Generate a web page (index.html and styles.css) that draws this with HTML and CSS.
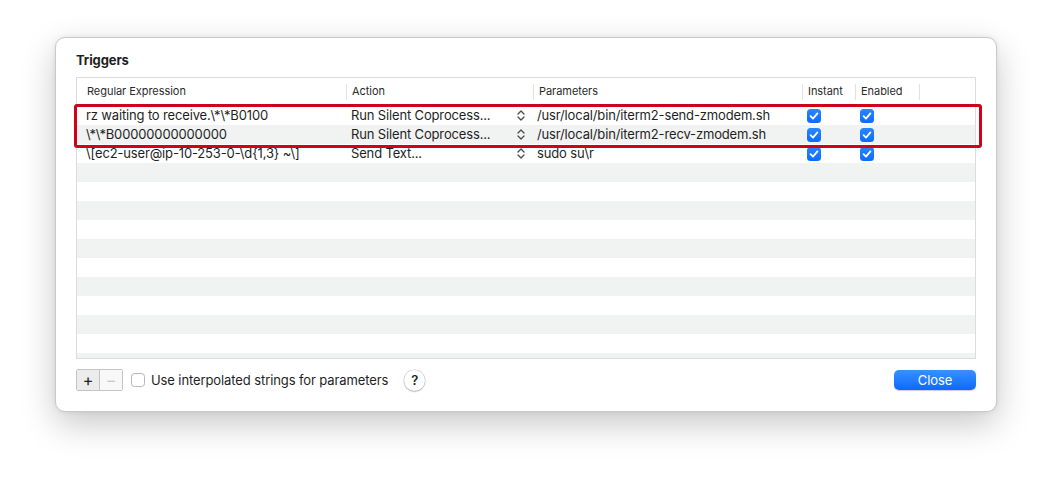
FILE: index.html
```html
<!DOCTYPE html>
<html>
<head>
<meta charset="utf-8">
<link rel="stylesheet" href="styles.css">
</head>
<body>
<div class="window">
  <div class="title">Triggers</div>
  <div class="table">
    <div class="thead">
      <div class="th c1">Regular Expression</div>
      <div class="th c2 sep">Action</div>
      <div class="th c3 sep">Parameters</div>
      <div class="th c4 sep">Instant</div>
      <div class="th c5 sep">Enabled</div>
      <div class="th c6 sep"></div>
    </div>
    <div class="tbody">
      <div class="tr">
        <div class="td c1">rz waiting to receive.\*\*B0100</div>
        <div class="td c2"><span class="act">Run Silent Coprocess...</span><svg class="chev" width="8" height="11" viewBox="0 0 8 11"><path d="M1 4 L4 1 L7 4 M1 7 L4 10 L7 7" fill="none" stroke="#4a4a4a" stroke-width="1.3" stroke-linecap="round" stroke-linejoin="round"/></svg></div>
        <div class="td c3">/usr/local/bin/iterm2-send-zmodem.sh</div>
        <div class="td c4"><span class="cb on"><svg width="14" height="14" viewBox="0 0 14 14"><path d="M3.6 7.2 L6 9.6 L10.4 4.4" fill="none" stroke="#fff" stroke-width="1.8" stroke-linecap="round" stroke-linejoin="round"/></svg></span></div>
        <div class="td c5"><span class="cb on"><svg width="14" height="14" viewBox="0 0 14 14"><path d="M3.6 7.2 L6 9.6 L10.4 4.4" fill="none" stroke="#fff" stroke-width="1.8" stroke-linecap="round" stroke-linejoin="round"/></svg></span></div>
        <div class="td c6"></div>
      </div>
      <div class="tr">
        <div class="td c1">\*\*B00000000000000</div>
        <div class="td c2"><span class="act">Run Silent Coprocess...</span><svg class="chev" width="8" height="11" viewBox="0 0 8 11"><path d="M1 4 L4 1 L7 4 M1 7 L4 10 L7 7" fill="none" stroke="#4a4a4a" stroke-width="1.3" stroke-linecap="round" stroke-linejoin="round"/></svg></div>
        <div class="td c3">/usr/local/bin/iterm2-recv-zmodem.sh</div>
        <div class="td c4"><span class="cb on"><svg width="14" height="14" viewBox="0 0 14 14"><path d="M3.6 7.2 L6 9.6 L10.4 4.4" fill="none" stroke="#fff" stroke-width="1.8" stroke-linecap="round" stroke-linejoin="round"/></svg></span></div>
        <div class="td c5"><span class="cb on"><svg width="14" height="14" viewBox="0 0 14 14"><path d="M3.6 7.2 L6 9.6 L10.4 4.4" fill="none" stroke="#fff" stroke-width="1.8" stroke-linecap="round" stroke-linejoin="round"/></svg></span></div>
        <div class="td c6"></div>
      </div>
      <div class="tr">
        <div class="td c1">\[ec2-user@ip-10-253-0-\d{1,3} ~\]</div>
        <div class="td c2"><span class="act">Send Text...</span><svg class="chev" width="8" height="11" viewBox="0 0 8 11"><path d="M1 4 L4 1 L7 4 M1 7 L4 10 L7 7" fill="none" stroke="#4a4a4a" stroke-width="1.3" stroke-linecap="round" stroke-linejoin="round"/></svg></div>
        <div class="td c3">sudo su\r</div>
        <div class="td c4"><span class="cb on"><svg width="14" height="14" viewBox="0 0 14 14"><path d="M3.6 7.2 L6 9.6 L10.4 4.4" fill="none" stroke="#fff" stroke-width="1.8" stroke-linecap="round" stroke-linejoin="round"/></svg></span></div>
        <div class="td c5"><span class="cb on"><svg width="14" height="14" viewBox="0 0 14 14"><path d="M3.6 7.2 L6 9.6 L10.4 4.4" fill="none" stroke="#fff" stroke-width="1.8" stroke-linecap="round" stroke-linejoin="round"/></svg></span></div>
        <div class="td c6"></div>
      </div>
    </div>
  </div>
  <div class="footer">
    <div class="seg">
      <div class="seg-btn plus">+</div>
      <div class="seg-btn minus">&minus;</div>
    </div>
    <label class="check"><span class="cb off"></span><span>Use interpolated strings for parameters</span></label>
    <div class="help">?</div>
    <div class="spacer"></div>
    <div class="close">Close</div>
  </div>
  <div class="highlight"></div>
</div>
</body>
</html>
```

FILE: styles.css
```css
* { box-sizing: border-box; }
html, body { margin: 0; padding: 0; background: #ffffff; }
body {
  font-family: "Inter", "Liberation Sans", sans-serif;
  color: #1f1f1f;
  width: 1052px;
  height: 486px;
  overflow: hidden;
}
.window {
  position: relative;
  margin: 37px 0 0 55px;
  width: 942px;
  height: 375px;
  background: #fff;
  border-radius: 10px;
  border: 1px solid #c9c9c9;
  box-shadow: 0 12px 34px rgba(0,0,0,0.22), 0 0 5px rgba(0,0,0,0.08);
  padding: 14px 21px 0 20px;
  display: flex;
  flex-direction: column;
}
.title {
  font-size: 13px;
  font-weight: 700;
  line-height: 16px;
  height: 16px;
  letter-spacing: -0.1px;
}
.table {
  margin-top: 9px;
  width: 900px;
  height: 282px;
  border: 1px solid #dcdcdc;
  display: flex;
  flex-direction: column;
  overflow: hidden;
}
.thead, .tr {
  display: grid;
  grid-template-columns: 269px 187px 269px 53px 64px 1fr;
}
.thead {
  height: 28px;
  border-bottom: 1px solid #e6e6e6;
}
.th {
  font-size: 11px;
  color: #2b2b2b;
  line-height: 27px;
  padding-left: 6px;
  position: relative;
  letter-spacing: -0.05px;
}
.th.c1 { padding-left: 10px; }
.th.sep::before {
  content: "";
  position: absolute;
  left: 0;
  top: 6px;
  bottom: 5px;
  width: 1px;
  background: #e2e2e2;
}
.tbody {
  flex: 1;
  background: repeating-linear-gradient(#ffffff 0 19px, #f1f2f2 19px 38px);
}
.tr { height: 19px; }
.td {
  font-size: 13px;
  line-height: 19px;
  white-space: nowrap;
  overflow: hidden;
  letter-spacing: -0.15px;
}
.td.c1 { padding-left: 9px; }
.td.c2 { padding-left: 5px; display: flex; align-items: center; }
.td.c2 .act { flex: 1; }
.td.c2 .chev { margin-right: 8px; }
.td.c3 { padding-left: 4px; }
.td.c4, .td.c5 { padding-left: 5px; display: flex; align-items: center; }
.cb {
  display: inline-block;
  width: 14px;
  height: 14px;
  border-radius: 3.5px;
}
.cb svg { display: block; }
.cb.on { background: linear-gradient(#2b86ff, #0a6cff); }
.cb.off {
  background: #fff;
  border: 1px solid #b8b8b8;
  box-shadow: inset 0 1px 0 rgba(0,0,0,0.03);
}
.footer {
  margin-top: 10px;
  height: 22px;
  display: flex;
  align-items: center;
}
.seg {
  display: flex;
  height: 22px;
  border: 1px solid #c4c4c4;
  border-radius: 2px;
}
.seg-btn {
  width: 23px;
  font-size: 16px;
  line-height: 20px;
  text-align: center;
}
.seg-btn.plus {
  background: #ececec;
  border-right: 1px solid #c4c4c4;
  color: #222;
}
.seg-btn.minus {
  background: #f8f8f8;
  color: #c8c8c8;
  width: 22px;
}
.check {
  display: flex;
  align-items: center;
  margin-left: 8px;
  font-size: 13px;
  letter-spacing: -0.1px;
}
.check .cb { margin-right: 6px; }
.help {
  margin-left: 16px;
  width: 21px;
  height: 21px;
  border-radius: 50%;
  background: #fff;
  box-shadow: 0 0 0 0.5px rgba(0,0,0,0.2), 0 1px 1.5px rgba(0,0,0,0.2);
  font-size: 13px;
  font-weight: 600;
  line-height: 21px;
  text-align: center;
}
.spacer { flex: 1; }
.close {
  width: 82px;
  height: 20px;
  border-radius: 5px;
  background: linear-gradient(#3a8fff, #0b6bff);
  box-shadow: 0 0.5px 1px rgba(0,0,0,0.2);
  color: #fff;
  font-size: 13px;
  line-height: 20px;
  text-align: center;
  letter-spacing: -0.1px;
  margin-right: -1px;
}
.highlight {
  position: absolute;
  left: 18px;
  top: 66px;
  width: 908px;
  height: 44px;
  border: 3px solid #d0021b;
  border-radius: 3px;
  pointer-events: none;
}
```
